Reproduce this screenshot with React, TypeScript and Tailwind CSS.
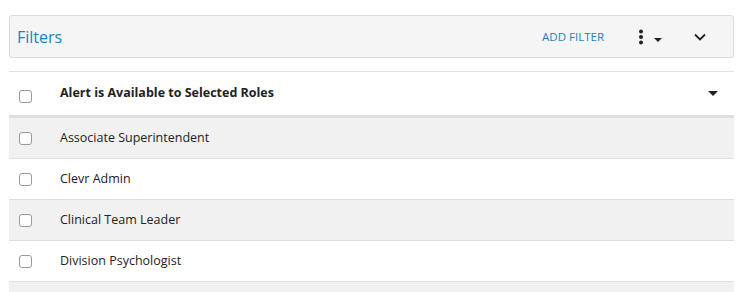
const roles = [
  "Associate Superintendent",
  "Clevr Admin",
  "Clinical Team Leader",
  "Division Psychologist",
  "",
];

function Box() {
  return (
    <span className="block w-[13px] h-[13px] rounded-[3px] border border-[#9a9a9a] bg-white" />
  );
}

export default function App() {
  return (
    <div
      className="w-[743px] h-[292px] bg-white overflow-hidden pt-[15px] pl-[9px] pr-[9px]"
      style={{ fontFamily: '"Open Sans", "Noto Sans", sans-serif' }}
    >
      <div className="h-[43px] flex items-center bg-[#f5f5f5] border border-[#dcdcdc] rounded-[3px] pl-[7px]">
        <span className="text-[16px] text-[#1b7fc3] leading-none">Filters</span>
        <span className="ml-auto text-[11.5px] text-[#1b7fc3] leading-none">ADD FILTER</span>
        <span className="ml-[34px] flex items-center">
          <svg width="6" height="16" viewBox="0 0 6 16">
            <circle cx="3" cy="2.5" r="2" fill="#222" />
            <circle cx="3" cy="8" r="2" fill="#222" />
            <circle cx="3" cy="13.5" r="2" fill="#222" />
          </svg>
          <svg width="8" height="4" viewBox="0 0 8 4" className="ml-[10px] mt-[7px]">
            <path d="M0 0h8L4 4z" fill="#222" />
          </svg>
        </span>
        <svg width="12" height="8" viewBox="0 0 12 8" className="ml-[32px] mr-[27px]">
          <path d="M1 1.5l5 5 5-5" fill="none" stroke="#222" strokeWidth="1.8" />
        </svg>
      </div>

      <div className="mt-[13px] border-t border-[#e2e2e2]">
        <div className="h-[46px] flex items-center border-b-[3px] border-[#dfdfdf] pl-[10px] pr-[16px]">
          <span className="mt-[5px]"><Box /></span>
          <span className="ml-[28px] text-[12.5px] font-bold text-[#222]">
            Alert is Available to Selected Roles
          </span>
          <svg width="10" height="5" viewBox="0 0 10 5" className="ml-auto">
            <path d="M0 0h10L5 5z" fill="#222" />
          </svg>
        </div>
        {roles.map((r, i) => (
          <div
            key={i}
            className={
              "h-[41px] flex items-center border-b border-[#dedede] pl-[10px] " +
              (i % 2 === 0 ? "bg-[#f1f1f1]" : "bg-white")
            }
          >
            {r && (
              <>
                <Box />
                <span className="ml-[28px] text-[12.5px] text-[#222]">{r}</span>
              </>
            )}
          </div>
        ))}
      </div>
    </div>
  );
}
